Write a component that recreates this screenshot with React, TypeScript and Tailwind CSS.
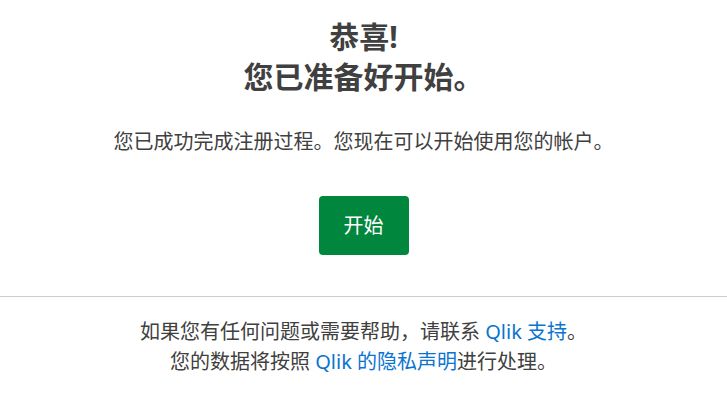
import React from 'react';

const App: React.FC = () => {
  return (
    <div
      className="w-full min-h-screen bg-white text-[#404040]"
      style={{ fontFamily: '"Noto Sans", "Noto Sans CJK SC", sans-serif' }}
    >
      <section className="flex flex-col items-center pt-[17px] pb-[41px]">
        <h1 className="text-center text-[30px] leading-[40px] font-bold">
          恭喜!
          <br />
          您已准备好开始。
        </h1>
        <p className="mt-[31px] text-[20px] leading-[28px]">
          您已成功完成注册过程。您现在可以开始使用您的帐户。
        </p>
        <button className="mt-[40px] w-[90px] h-[59px] rounded-[4px] bg-[#00873d] text-white text-[20px]">
          开始
        </button>
      </section>
      <div className="border-t border-[#cccccc]" />
      <footer className="pt-[20px] text-center text-[20px] leading-[30px]">
        <p>
          如果您有任何问题或需要帮助，请联系 <a className="text-[#0a74d1]">Qlik 支持</a>。
        </p>
        <p>
          您的数据将按照 <a className="text-[#0a74d1]">Qlik 的隐私声明</a>进行处理。
        </p>
      </footer>
    </div>
  );
};

export default App;
